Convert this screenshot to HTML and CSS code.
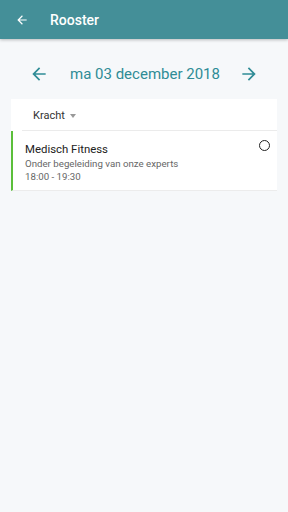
FILE: index.html
```html
<!DOCTYPE html>
<html>
<head>
<meta charset="utf-8">
<link rel="stylesheet" href="styles.css">
</head>
<body>
<header class="toolbar">
  <svg class="tb-icon" width="14" height="14" viewBox="0 0 24 24"><path d="M20 11H7.83l5.59-5.59L12 4l-8 8 8 8 1.41-1.41L7.83 13H20v-2z" fill="#fff"/></svg>
  <span class="title">Rooster</span>
</header>
<main class="content">
  <div class="datebar">
    <svg class="nav" width="20" height="20" viewBox="0 0 24 24"><path d="M20 11H7.83l5.59-5.59L12 4l-8 8 8 8 1.41-1.41L7.83 13H20v-2z" fill="#2f8c96"/></svg>
    <span class="date">ma 03 december 2018</span>
    <svg class="nav" width="20" height="20" viewBox="0 0 24 24"><path d="M4 11h12.17l-5.59-5.59L12 4l8 8-8 8-1.41-1.41L16.17 13H4v-2z" fill="#2f8c96"/></svg>
  </div>
  <section class="panel">
    <div class="filter">
      <span>Kracht</span>
      <span class="caret"></span>
    </div>
    <div class="card">
      <div class="card-text">
        <div class="name">Medisch Fitness</div>
        <div class="desc">Onder begeleiding van onze experts</div>
        <div class="time">18:00 - 19:30</div>
      </div>
      <span class="ring"></span>
    </div>
  </section>
</main>
</body>
</html>
```
FILE: styles.css
```css
html, body { margin: 0; padding: 0; }
body {
  width: 288px;
  height: 512px;
  background: #f6f8fa;
  font-family: Roboto, "Noto Sans", sans-serif;
  overflow: hidden;
}
.toolbar {
  height: 39px;
  background: #448f98;
  display: flex;
  align-items: center;
  padding-left: 15px;
  box-shadow: 0 1px 3px rgba(0,0,0,0.25);
  position: relative;
}
.tb-icon { display: block; }
.title {
  color: #fff;
  font-size: 14px;
  font-weight: 500;
  margin-left: 21px;
}
.content { padding: 0 11px; }
.datebar {
  height: 50px;
  display: flex;
  align-items: center;
  justify-content: space-between;
  padding: 10px 18px 0 18px;
}
.nav { display: block; }
.date {
  color: #2f8c96;
  font-size: 15px;
  margin-left: 2px;
}
.panel { background: #fff; }
.filter {
  height: 30px;
  padding-top: 1px;
  display: flex;
  align-items: center;
  font-size: 11px;
  color: #333;
  border-bottom: 1px solid #ebebeb;
  margin-left: 11px;
  padding-left: 11px;
}
.caret {
  width: 0; height: 0;
  border-left: 3.5px solid transparent;
  border-right: 3.5px solid transparent;
  border-top: 4px solid #999;
  margin-left: 5px;
  margin-top: 1px;
}
.card {
  display: flex;
  border-left: 2px solid #5bbf3a;
  padding: 11px 7px 9px 12px;
  border-bottom: 1px solid #ececec;
  height: 39px;
}
.card-text { flex: 1; }
.name { font-size: 11.4px; color: #222; line-height: 14px; margin-bottom: 1px;}
.desc, .time { font-size: 9.7px; color: #666; line-height: 13px; }
.ring {
  width: 9px; height: 9px;
  border: 1px solid #222;
  border-radius: 50%;
  margin-top: -2px;
}
```
